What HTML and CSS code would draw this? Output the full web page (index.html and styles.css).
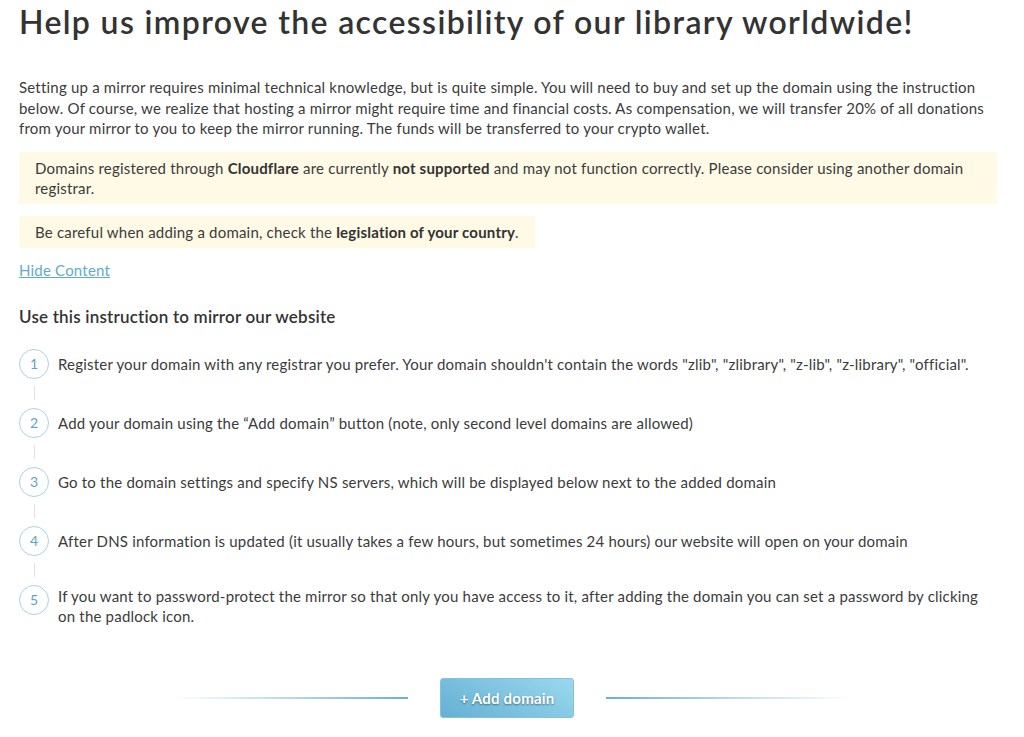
FILE: index.html
```html
<!DOCTYPE html>
<html lang="en">
<head>
<meta charset="utf-8">
<title>Mirror</title>
<link rel="stylesheet" href="styles.css">
</head>
<body>
<main class="page">
  <h1 class="title">Help us improve the accessibility of our library worldwide!</h1>
  <p class="intro">Setting up a mirror requires minimal technical knowledge, but is quite simple. You will need to buy and set up the domain using the instruction below. Of course, we realize that hosting a mirror might require time and financial costs. As compensation, we will transfer 20% of all donations from your mirror to you to keep the mirror running. The funds will be transferred to your crypto wallet.</p>
  <div class="notice">Domains registered through <b>Cloudflare</b> are currently <b>not supported</b> and may not function correctly. Please consider using another domain registrar.</div>
  <div class="notice notice-inline">Be careful when adding a domain, check the <b>legislation of your country</b>.</div>
  <a class="toggle" href="#">Hide Content</a>
  <h2 class="subtitle">Use this instruction to mirror our website</h2>
  <ol class="steps">
    <li class="step"><div class="marker"><span class="circle">1</span><span class="line"></span></div><div class="text">Register your domain with any registrar you prefer. Your domain shouldn't contain the words "zlib", "zlibrary", "z-lib", "z-library", "official".</div></li>
    <li class="step"><div class="marker"><span class="circle">2</span><span class="line"></span></div><div class="text">Add your domain using the “Add domain” button (note, only second level domains are allowed)</div></li>
    <li class="step"><div class="marker"><span class="circle">3</span><span class="line"></span></div><div class="text">Go to the domain settings and specify NS servers, which will be displayed below next to the added domain</div></li>
    <li class="step"><div class="marker"><span class="circle">4</span><span class="line"></span></div><div class="text">After DNS information is updated (it usually takes a few hours, but sometimes 24 hours) our website will open on your domain</div></li>
    <li class="step"><div class="marker"><span class="circle">5</span></div><div class="text text-multi">If you want to password-protect the mirror so that only you have access to it, after adding the domain you can set a password by clicking on the padlock icon.</div></li>
  </ol>
  <div class="actions">
    <span class="rule rule-left"></span>
    <button class="add-btn" type="button">+ Add domain</button>
    <span class="rule rule-right"></span>
  </div>
</main>
</body>
</html>
```
FILE: styles.css
```css
* { box-sizing: border-box; }
html, body { margin: 0; background: #fff; }
body {
  font-family: "Lato", "Open Sans", sans-serif;
  color: #3b3b3b;
  font-size: 15px;
  line-height: 20.5px;
  letter-spacing: 0.2px;
}
.page {
  padding: 0 27px 0 19px;
}
.title {
  margin: 2px 0 0;
  font-size: 32px;
  line-height: 40px;
  font-weight: 600;
  color: #333;
  letter-spacing: 1.35px;
}
.intro {
  margin: 35px 0 0;
}
.notice {
  margin-top: 13px;
  background: #fefae6;
  padding: 6px 16px;
  line-height: 20px;
}
.notice b { font-weight: 700; color: #333; }
.notice-inline {
  display: inline-block;
  margin-top: 12px;
}
.toggle {
  display: block;
  width: max-content;
  margin-top: 12px;
  color: #5fabcf;
  text-decoration: underline;
  line-height: 20px;
}
.subtitle {
  margin: 27px 0 0;
  font-size: 17px;
  line-height: 20px;
  font-weight: 600;
  color: #333;
}
.steps {
  list-style: none;
  margin: 22px 0 0;
  padding: 0;
}
.step {
  display: flex;
  align-items: flex-start;
  gap: 9px;
}
.marker {
  display: flex;
  flex-direction: column;
  align-items: center;
  width: 30px;
  flex: none;
}
.circle {
  width: 30px;
  height: 30px;
  border-radius: 50%;
  border: 1px solid #a9d3e3;
  color: #5aa6c6;
  font-size: 14px;
  line-height: 28px;
  text-align: center;
  letter-spacing: 0;
}
.line {
  width: 1px;
  height: 14px;
  margin: 7px 0 8px;
  background: #e2e2e2;
}
.text {
  padding-top: 5px;
  line-height: 20px;
}
.text-multi { padding-top: 1px; }
.actions {
  margin-top: 52px;
  padding-left: 9px;
  display: flex;
  align-items: center;
  justify-content: center;
  gap: 32px;
}
.rule {
  height: 2px;
  width: 233px;
}
.rule-left {
  background: linear-gradient(to right, rgba(106,176,208,0), #6ab0d0);
}
.rule-right {
  width: 244px;
  background: linear-gradient(to left, rgba(106,176,208,0), #6ab0d0);
}
.add-btn {
  width: 134px;
  height: 40px;
  border: 1px solid #7fc3de;
  border-radius: 3px;
  background: linear-gradient(30deg, #64b0d3, #9bd8ee);
  color: #fff;
  font-family: inherit;
  font-size: 15px;
  font-weight: 700;
  letter-spacing: 0.2px;
  text-shadow: 0 1px 2px rgba(0,0,0,0.45);
  cursor: pointer;
}
```
